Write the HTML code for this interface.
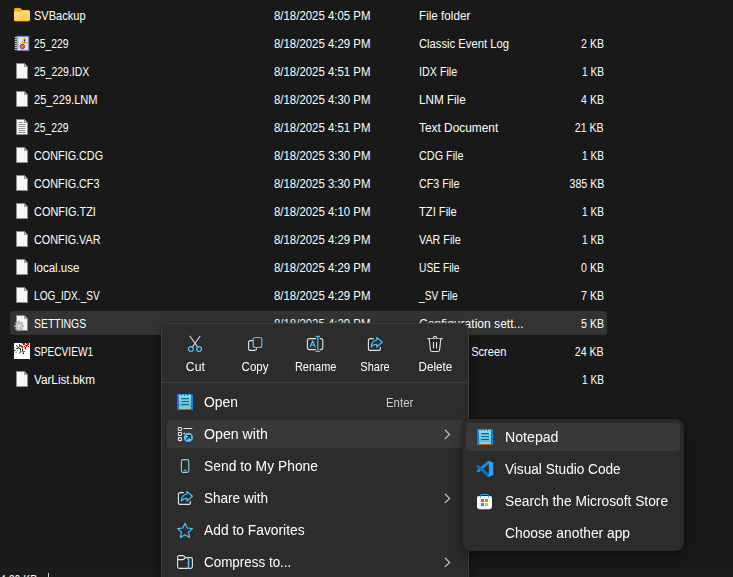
<!DOCTYPE html>
<html lang="en"><head><meta charset="utf-8"><title>File Explorer</title>
<style>
html,body{margin:0;padding:0}
body{width:733px;height:577px;background:#191919;overflow:hidden;position:relative;font-family:"Liberation Sans",sans-serif}
.t{position:absolute;white-space:pre;display:block}
.f12{font-size:12px;line-height:16px}
.f14{font-size:14px;line-height:20px}
svg{position:absolute;overflow:visible}
.gl{position:absolute;left:0;top:0;width:733px;height:577px;will-change:transform;pointer-events:none}
.sel{position:absolute;left:10px;top:311px;width:597px;height:24px;border-radius:3px;background:#333333}
.status{position:absolute;left:0;top:568px;width:733px;height:9px;background:#1c1c1c}
.vsep{position:absolute;left:48px;top:573px;width:1px;height:4px;background:#d0d0d0}
.menu{position:absolute;left:161px;top:323px;width:306px;height:270px;background:#2c2c2c;border:1px solid #3c3c3c;border-radius:8px;box-shadow:0 6px 14px rgba(0,0,0,.32),0 0 3px rgba(0,0,0,.25);box-sizing:content-box}
.msep{position:absolute;left:162px;top:382px;width:306px;height:1px;background:#3d3d3d}
.hov{position:absolute;left:167px;top:420px;width:297px;height:28px;border-radius:4px;background:#383838}
.sub{position:absolute;left:462px;top:419px;width:220px;height:130px;background:#2c2c2c;border:1px solid #272727;border-radius:8px;box-shadow:0 6px 14px rgba(0,0,0,.32),0 0 3px rgba(0,0,0,.3)}
.shov{position:absolute;left:466px;top:423px;width:214px;height:28px;border-radius:4px;background:#383838}
</style></head>
<body>
<div class="sel"></div>
<div class="status"></div><div class="vsep"></div>

<svg width="0" height="0" style="left:0;top:0"><defs>
<linearGradient id="fg" x1="0" y1="0" x2=".6" y2="1"><stop offset="0" stop-color="#ffe394"/><stop offset="1" stop-color="#ffcb45"/></linearGradient>
<linearGradient id="np" x1="0" y1="0" x2="0" y2="1"><stop offset="0" stop-color="#93dcf0"/><stop offset="1" stop-color="#5cb6d0"/></linearGradient>
<linearGradient id="vs" x1="0" y1="0" x2="0" y2="1"><stop offset="0" stop-color="#2aa7f5"/><stop offset="1" stop-color="#0a74c8"/></linearGradient>
<g id="file"><path d="M.5 .5H8.5L11.5 3.5V15.5H.5Z" fill="#f6f6f6" stroke="#8d8d8d"/><path d="M8.5 .5V3.5H11.5Z" fill="#d9d9d9" stroke="#8d8d8d" stroke-linejoin="round"/></g>
</defs></svg>
<svg style="left:14px;top:7px" width="16" height="16" viewBox="0 0 16 16">
<path d="M0 2.600Q0 1 1.600 1H5.600Q6.300 1 6.800 1.500L8.300 3H14.400Q16 3 16 4.600V11H0Z" fill="#f4b30c"/>
<path d="M0 6Q0 4.800 1.400 4.800H6.100Q6.800 4.800 7.300 4.400L8.100 3.800H14.400Q16 3.800 16 5.400V12.400Q16 14 14.400 14H1.600Q0 14 0 12.400Z" fill="url(#fg)"/>
<path d="M.4 5.500Q.6 5.200 1.400 5.200H6.200Q6.900 5.200 7.400 4.800L8.200 4.200H14.400" stroke="#fff0bd" stroke-width=".6" fill="none" opacity=".8"/>
<path d="M.3 13.300Q.8 14 1.600 14H14.400Q15.200 14 15.700 13.300" stroke="#eeae20" stroke-width=".7" fill="none"/>
</svg>
<svg style="left:14px;top:35px" width="16" height="16" viewBox="0 0 16 16">
<rect x="3.300" y="1.300" width="11.500" height="14.300" fill="#c3d1f1" stroke="#6a82c6" stroke-width=".9"/>
<path d="M5 3.300H13.800M5 5.300H13.800M5 7.300H13.800M5 9.300H13.800M5 11.300H13.800M5 13.300H13.800" stroke="#f4f7ff" stroke-width="1"/>
<path d="M1.200 2.700L3.600 2M1.200 4.700L3.600 4M1.200 6.700L3.600 6M1.200 8.700L3.600 8M1.200 10.700L3.600 10M1.200 12.700L3.600 12M1.200 14.700L3.600 14" stroke="#c9c9c9" stroke-width="1.200" stroke-linecap="round"/>
<path d="M10.200 3.200Q10.500 2.700 10.800 3.200L13.100 7.600Q13.300 8.200 12.700 8.200H8.300Q7.700 8.200 7.900 7.600Z" fill="#f2d411" stroke="#c9a90c" stroke-width=".5" stroke-linejoin="round"/>
<path d="M10.500 4.500V6.300M10.500 7V7.500" stroke="#1a1a1a" stroke-width="1"/>
<circle cx="8.400" cy="11.500" r="2.400" fill="#d61f26" stroke="#a8141a" stroke-width=".4"/>
<path d="M7.500 10.600L9.300 12.400M9.300 10.600L7.500 12.400" stroke="#fff" stroke-width=".9"/>
</svg>
<svg style="left:16px;top:63px" width="12" height="16" viewBox="0 0 12 16"><use href="#file"/></svg>
<svg style="left:16px;top:91px" width="12" height="16" viewBox="0 0 12 16"><use href="#file"/></svg>
<svg style="left:16px;top:147px" width="12" height="16" viewBox="0 0 12 16"><use href="#file"/></svg>
<svg style="left:16px;top:175px" width="12" height="16" viewBox="0 0 12 16"><use href="#file"/></svg>
<svg style="left:16px;top:203px" width="12" height="16" viewBox="0 0 12 16"><use href="#file"/></svg>
<svg style="left:16px;top:231px" width="12" height="16" viewBox="0 0 12 16"><use href="#file"/></svg>
<svg style="left:16px;top:259px" width="12" height="16" viewBox="0 0 12 16"><use href="#file"/></svg>
<svg style="left:16px;top:287px" width="12" height="16" viewBox="0 0 12 16"><use href="#file"/></svg>
<svg style="left:16px;top:371px" width="12" height="16" viewBox="0 0 12 16"><use href="#file"/></svg>
<svg style="left:16px;top:119px" width="12" height="16" viewBox="0 0 12 16"><use href="#file"/><path d="M2.500 3.500H7M2.500 5.500H9.500M2.500 7.500H9.500M2.500 9.500H9.500M2.500 11.500H9.500M2.500 13.500H9.500" stroke="#8c8c8c" stroke-width=".9"/></svg>
<svg style="left:16px;top:315px" width="12" height="16" viewBox="0 0 12 16"><use href="#file"/><path d="M6.21 10.21L7.76 10.39L7.76 11.61L6.21 11.79L5.80 12.78L6.77 14.00L5.90 14.87L4.68 13.90L3.69 14.31L3.51 15.86L2.29 15.86L2.11 14.31L1.12 13.90L-0.10 14.87L-0.97 14.00L0.00 12.78L-0.41 11.79L-1.96 11.61L-1.96 10.39L-0.41 10.21L0.00 9.22L-0.97 8.00L-0.10 7.13L1.12 8.10L2.11 7.69L2.29 6.14L3.51 6.14L3.69 7.69L4.68 8.10L5.90 7.13L6.77 8.00L5.80 9.22Z" fill="#ccd3da" stroke="#78818c" stroke-width=".55" stroke-linejoin="round"/><circle cx="2.9" cy="11.0" r="1.500" fill="#ffffff" stroke="#8b949e" stroke-width=".5"/></svg>
<svg style="left:14px;top:343px" width="16" height="16" viewBox="0 0 16 16">
<rect width="16" height="16" fill="#fff"/>
<g stroke="#0a0a0a" stroke-width=".9" fill="none" stroke-linecap="round">
<path d="M2.400 2.600L6.200 6.200M5.500 1.500L5.900 3.600M5.900 2.700L7.600 2.900L8.200 4.800M2.200 5.600L4.800 4.700M6.300 5.500L6.900 9L5.600 10M8.400 5.800L9 9.400L10.400 8.600"/>
<path d="M.4 7.500H.9M9.300 10.500H9.700M11.400 4.500V5.800" stroke-width="1.100"/>
<path d="M4 7.200L3 7.900M1.400 9.500H2.600" stroke="#9a9a9a" stroke-width=".7"/>
</g>
<g fill="#f00" shape-rendering="crispEdges"><rect x="12" y="0" width="2" height="1"/><rect x="14" y="0" width="1" height="2"/><rect x="11" y="2" width="1" height="1"/><rect x="13" y="2" width="1" height="1"/><rect x="10" y="3" width="1" height="1"/><rect x="12" y="3" width="1" height="1"/><rect x="14" y="3" width="1" height="1"/><rect x="8" y="3" width="1" height="1"/><rect x="13" y="1" width="1" height="1"/><rect x="8" y="0" width="3" height="1"/><rect x="9" y="1" width="2" height="1"/></g>
<rect x="12" y="2" width="1" height="1" fill="#111" shape-rendering="crispEdges"/>
</svg>

<span class="t f12" style="left:34.2px;top:8.0px;color:#fff;transform:scaleX(0.9207);transform-origin:0 50%">SVBackup</span>
<span class="t f12" style="left:274.3px;top:8.0px;color:#fff;transform:scaleX(0.9515);transform-origin:0 50%">8/18/2025 4:05 PM</span>
<span class="t f12" style="left:418.5px;top:8.0px;color:#fff;transform:scaleX(0.9737);transform-origin:0 50%">File folder</span>
<span class="t f12" style="left:34.2px;top:36.0px;color:#fff;transform:scaleX(0.8590);transform-origin:0 50%">25_229</span>
<span class="t f12" style="left:274.3px;top:36.0px;color:#fff;transform:scaleX(0.9515);transform-origin:0 50%">8/18/2025 4:29 PM</span>
<span class="t f12" style="left:418.5px;top:36.0px;color:#fff;transform:scaleX(0.9370);transform-origin:0 50%">Classic Event Log</span>
<span class="t f12" style="left:578.08px;top:36.0px;color:#fff;transform:scaleX(0.8802);transform-origin:100% 50%">2 KB</span>
<span class="t f12" style="left:34.2px;top:64.0px;color:#fff;transform:scaleX(0.8724);transform-origin:0 50%">25_229.IDX</span>
<span class="t f12" style="left:274.3px;top:64.0px;color:#fff;transform:scaleX(0.9515);transform-origin:0 50%">8/18/2025 4:51 PM</span>
<span class="t f12" style="left:418.5px;top:64.0px;color:#fff;transform:scaleX(0.8949);transform-origin:0 50%">IDX File</span>
<span class="t f12" style="left:578.08px;top:64.0px;color:#fff;transform:scaleX(0.8495);transform-origin:100% 50%">1 KB</span>
<span class="t f12" style="left:34.2px;top:92.0px;color:#fff;transform:scaleX(0.9255);transform-origin:0 50%">25_229.LNM</span>
<span class="t f12" style="left:274.3px;top:92.0px;color:#fff;transform:scaleX(0.9515);transform-origin:0 50%">8/18/2025 4:30 PM</span>
<span class="t f12" style="left:418.5px;top:92.0px;color:#fff;transform:scaleX(0.9726);transform-origin:0 50%">LNM File</span>
<span class="t f12" style="left:578.08px;top:92.0px;color:#fff;transform:scaleX(0.8802);transform-origin:100% 50%">4 KB</span>
<span class="t f12" style="left:34.2px;top:120.0px;color:#fff;transform:scaleX(0.8590);transform-origin:0 50%">25_229</span>
<span class="t f12" style="left:274.3px;top:120.0px;color:#fff;transform:scaleX(0.9515);transform-origin:0 50%">8/18/2025 4:51 PM</span>
<span class="t f12" style="left:418.5px;top:120.0px;color:#fff;transform:scaleX(0.9894);transform-origin:0 50%">Text Document</span>
<span class="t f12" style="left:571.40px;top:120.0px;color:#fff;transform:scaleX(0.8837);transform-origin:100% 50%">21 KB</span>
<span class="t f12" style="left:34.2px;top:148.0px;color:#fff;transform:scaleX(0.9012);transform-origin:0 50%">CONFIG.CDG</span>
<span class="t f12" style="left:274.3px;top:148.0px;color:#fff;transform:scaleX(0.9515);transform-origin:0 50%">8/18/2025 3:30 PM</span>
<span class="t f12" style="left:418.5px;top:148.0px;color:#fff;transform:scaleX(0.9018);transform-origin:0 50%">CDG File</span>
<span class="t f12" style="left:578.08px;top:148.0px;color:#fff;transform:scaleX(0.8495);transform-origin:100% 50%">1 KB</span>
<span class="t f12" style="left:34.2px;top:176.0px;color:#fff;transform:scaleX(0.9013);transform-origin:0 50%">CONFIG.CF3</span>
<span class="t f12" style="left:274.3px;top:176.0px;color:#fff;transform:scaleX(0.9515);transform-origin:0 50%">8/18/2025 3:30 PM</span>
<span class="t f12" style="left:418.5px;top:176.0px;color:#fff;transform:scaleX(0.8910);transform-origin:0 50%">CF3 File</span>
<span class="t f12" style="left:564.73px;top:176.0px;color:#fff;transform:scaleX(0.8863);transform-origin:100% 50%">385 KB</span>
<span class="t f12" style="left:34.2px;top:204.0px;color:#fff;transform:scaleX(0.9103);transform-origin:0 50%">CONFIG.TZI</span>
<span class="t f12" style="left:274.3px;top:204.0px;color:#fff;transform:scaleX(0.9515);transform-origin:0 50%">8/18/2025 4:10 PM</span>
<span class="t f12" style="left:418.5px;top:204.0px;color:#fff;transform:scaleX(0.9294);transform-origin:0 50%">TZI File</span>
<span class="t f12" style="left:578.08px;top:204.0px;color:#fff;transform:scaleX(0.8495);transform-origin:100% 50%">1 KB</span>
<span class="t f12" style="left:34.2px;top:232.0px;color:#fff;transform:scaleX(0.9013);transform-origin:0 50%">CONFIG.VAR</span>
<span class="t f12" style="left:274.3px;top:232.0px;color:#fff;transform:scaleX(0.9515);transform-origin:0 50%">8/18/2025 4:29 PM</span>
<span class="t f12" style="left:418.5px;top:232.0px;color:#fff;transform:scaleX(0.8977);transform-origin:0 50%">VAR File</span>
<span class="t f12" style="left:578.08px;top:232.0px;color:#fff;transform:scaleX(0.8495);transform-origin:100% 50%">1 KB</span>
<span class="t f12" style="left:34.2px;top:260.0px;color:#fff;transform:scaleX(0.9583);transform-origin:0 50%">local.use</span>
<span class="t f12" style="left:274.3px;top:260.0px;color:#fff;transform:scaleX(0.9515);transform-origin:0 50%">8/18/2025 4:29 PM</span>
<span class="t f12" style="left:418.5px;top:260.0px;color:#fff;transform:scaleX(0.8554);transform-origin:0 50%">USE File</span>
<span class="t f12" style="left:578.08px;top:260.0px;color:#fff;transform:scaleX(0.8802);transform-origin:100% 50%">0 KB</span>
<span class="t f12" style="left:34.2px;top:288.0px;color:#fff;transform:scaleX(0.8431);transform-origin:0 50%">LOG_IDX._SV</span>
<span class="t f12" style="left:274.3px;top:288.0px;color:#fff;transform:scaleX(0.9515);transform-origin:0 50%">8/18/2025 4:29 PM</span>
<span class="t f12" style="left:418.5px;top:288.0px;color:#fff;transform:scaleX(0.8532);transform-origin:0 50%">_SV File</span>
<span class="t f12" style="left:578.08px;top:288.0px;color:#fff;transform:scaleX(0.8802);transform-origin:100% 50%">7 KB</span>
<span class="t f12" style="left:34.2px;top:316.0px;color:#fff;transform:scaleX(0.8698);transform-origin:0 50%">SETTINGS</span>
<span class="t f12" style="left:274.3px;top:316.0px;color:#fff;transform:scaleX(0.9515);transform-origin:0 50%">8/18/2025 4:29 PM</span>
<span class="t f12" style="left:418.5px;top:316.0px;color:#fff;transform:scaleX(1.0052);transform-origin:0 50%">Configuration sett...</span>
<span class="t f12" style="left:578.08px;top:316.0px;color:#fff;transform:scaleX(0.8802);transform-origin:100% 50%">5 KB</span>
<span class="t f12" style="left:34.2px;top:344.0px;color:#fff;transform:scaleX(0.8439);transform-origin:0 50%">SPECVIEW1</span>
<span class="t f12" style="left:274.3px;top:344.0px;color:#fff;transform:scaleX(0.9515);transform-origin:0 50%">8/18/2025 4:29 PM</span>
<span class="t f12" style="left:418.5px;top:344.0px;color:#fff;transform:scaleX(0.9238);transform-origin:0 50%">SpecView Screen</span>
<span class="t f12" style="left:571.40px;top:344.0px;color:#fff;transform:scaleX(0.8837);transform-origin:100% 50%">24 KB</span>
<span class="t f12" style="left:34.2px;top:372.0px;color:#fff;transform:scaleX(0.9765);transform-origin:0 50%">VarList.bkm</span>
<span class="t f12" style="left:274.3px;top:372.0px;color:#fff;transform:scaleX(0.9515);transform-origin:0 50%">8/18/2025 4:29 PM</span>
<span class="t f12" style="left:418.5px;top:372.0px;color:#fff;transform:scaleX(0.9140);transform-origin:0 50%">BKM File</span>
<span class="t f12" style="left:578.08px;top:372.0px;color:#fff;transform:scaleX(0.8495);transform-origin:100% 50%">1 KB</span>
<span class="t f12" style="left:0.0px;top:571.5px;color:#fff;transform:scaleX(0.8735);transform-origin:0 50%">4.20 KB</span>

<div class="menu"></div>
<div class="msep"></div>
<div class="hov"></div>

<svg style="left:0;top:0" width="733" height="577" viewBox="0 0 733 577" fill="none" stroke-linecap="round" stroke-linejoin="round">
<!-- cut -->
<g stroke-width="1.1">
<path d="M190 336.200L197.800 347.200M200 336.200L192.200 347.200" stroke="#e4e4e4"/>
<circle cx="190.900" cy="349.100" r="2.400" stroke="#4cc2ff" stroke-width="1.2"/>
<circle cx="199.100" cy="349.100" r="2.400" stroke="#4cc2ff" stroke-width="1.2"/>
</g>
<!-- copy -->
<path d="M252.800 340.600H250.600Q248.600 340.600 248.600 342.600V348.400Q248.600 350.400 250.600 350.400H254.600Q256.600 350.400 256.600 348.600" stroke="#e4e4e4" stroke-width="1.1"/>
<rect x="253.200" y="337.500" width="8.600" height="10" rx="2" stroke="#4cc2ff" stroke-width="1.2"/>
<!-- rename -->
<path d="M315.600 338.600H309.400Q307.400 338.600 307.400 340.600V347.600Q307.400 349.600 309.400 349.600H315.600M320 338.600H320.800Q322.800 338.600 322.800 340.600V347.600Q322.800 349.600 320.800 349.600H320" stroke="#e4e4e4" stroke-width="1.1"/>
<path d="M317.800 336.300V351.500M316 336.300H319.600M316 351.500H319.600" stroke="#4cc2ff" stroke-width="1.2"/>
<path d="M310.200 347L312.700 340.800L315.200 347M311.100 345H314.300" stroke="#4cc2ff" stroke-width="1.100"/>
<!-- share (top) -->
<path d="M373.400 338.600H370.400Q368.400 338.600 368.400 340.600V348.400Q368.400 350.400 370.400 350.400H378.400Q380.400 350.400 380.400 348.400V347.400" stroke="#e4e4e4" stroke-width="1.1"/>
<path d="M376.800 337.400L382.200 342.200L376.800 347V344.500Q373.200 344.200 371.200 347Q371.600 340.600 376.800 340Z" stroke="#4cc2ff" stroke-width="1.200"/>
<!-- delete -->
<path d="M427.800 338.600H442.200M433.200 338.400Q433.200 336.400 435 336.400Q436.800 336.400 436.800 338.400" stroke="#e4e4e4" stroke-width="1.1"/>
<path d="M429.200 338.800L430.400 350Q430.600 351.500 432.100 351.500H437.900Q439.400 351.500 439.600 350L440.800 338.800" stroke="#e4e4e4" stroke-width="1.1" fill="#222"/>
<path d="M433.500 342.300V348M436.500 342.300V348" stroke="#e4e4e4" stroke-width="1.1"/>

<!-- open: notepad -->
<g id="npd">
<rect x="177" y="394" width="16" height="16" fill="#0c7ee0"/>
<rect x="179" y="394.700" width="12" height="14" fill="url(#np)"/>
<path d="M181.500 394.600V395.700M184.500 394.600V395.700M187.500 394.600V395.700" stroke="#075f86" stroke-width="1.100" stroke-linecap="butt"/>
<path d="M181.200 398.600H188.900M181.200 401.500H188.900M181.200 404.500H188.900" stroke="#04688a" stroke-width="1.100" stroke-linecap="butt"/>
<rect x="179.400" y="407.700" width="11.200" height="1" fill="#f7fcff"/>
<rect x="179" y="408.700" width="12" height="1.300" fill="#c4560c"/>
</g>

<!-- open with -->
<g stroke="#e4e4e4" stroke-width="1.1">
<rect x="178.400" y="427.500" width="3" height="3" rx=".6"/>
<rect x="178.400" y="432.500" width="3" height="3" rx=".6"/>
<rect x="178.400" y="437.600" width="3" height="3" rx=".6"/>
<path d="M183.800 428.500H191.800M183.800 433.400H184.600" />
</g>
<circle cx="188.400" cy="437.400" r="4.600" fill="#4cc2ff"/>
<path d="M186.700 439.100L190.200 435.600M187.400 435.500H190.300V438.400" stroke="#111" stroke-width="1.200"/>

<!-- phone -->
<rect x="181.400" y="459.600" width="7.400" height="12.800" rx="1.600" stroke="#7fd6ec" stroke-width="1.1"/>
<path d="M184.200 470.300H186" stroke="#7fd6ec" stroke-width="1.1"/>

<!-- share with -->
<path d="M183.400 492.600H180.400Q178.400 492.600 178.400 494.600V502.400Q178.400 504.400 180.400 504.400H188.400Q190.400 504.400 190.400 502.400V501.400" stroke="#e4e4e4" stroke-width="1.1"/>
<path d="M187 491.400L192.400 496.200L187 501V498.500Q183.400 498.200 181.400 501Q181.800 494.600 187 494Z" stroke="#4cc2ff" stroke-width="1.200"/>

<!-- star -->
<path d="M185 523.200L187.200 528L192.400 528.600L188.500 532.200L189.600 537.400L185 534.800L180.400 537.400L181.500 532.200L177.600 528.600L182.800 528Z" stroke="#4cc2ff" stroke-width="1.200"/>

<!-- compress -->
<path d="M177.600 557.400Q177.600 555.600 179.400 555.600H182.600Q183.400 555.600 184 556.200L185.400 557.600H190.600Q192.400 557.600 192.400 559.400V566.600Q192.400 568.400 190.600 568.400H179.400Q177.600 568.400 177.600 566.600Z" stroke="#e4e4e4" stroke-width="1.1"/>
<path d="M177.600 559.600H182.600Q183.400 559.600 184 559L185.400 557.600" stroke="#e4e4e4" stroke-width="1.1"/>
<path d="M188.500 557.600V568.900" stroke="#4cc2ff" stroke-width="1.200" stroke-linecap="butt"/>
<path d="M187.300 559.300h1.400M188.300 561.200h1.400M187.300 563.100h1.400M188.300 565h1.400M187.300 566.900h1.400" stroke="#4cc2ff" stroke-width="1.100" stroke-linecap="butt"/>

<!-- chevrons -->
<g stroke="#d8d8d8" stroke-width="1.1">
<path d="M445.200 430.200L449.600 434.400L445.200 438.600"/>
<path d="M445.200 494.200L449.600 498.400L445.200 502.600"/>
<path d="M445.200 558.200L449.600 562.400L445.200 566.600"/>
</g>
</svg>

<div class="gl">
<span class="t f12" style="left:186.36px;top:359.0px;color:#fff;transform:scaleX(1.0167);transform-origin:50% 50%">Cut</span>
<span class="t f12" style="left:241.09px;top:359.0px;color:#fff;transform:scaleX(0.9566);transform-origin:50% 50%">Copy</span>
<span class="t f12" style="left:292.92px;top:359.0px;color:#fff;transform:scaleX(0.9149);transform-origin:50% 50%">Rename</span>
<span class="t f12" style="left:358.98px;top:359.0px;color:#fff;transform:scaleX(0.9147);transform-origin:50% 50%">Share</span>
<span class="t f12" style="left:418.16px;top:359.0px;color:#fff;transform:scaleX(0.9658);transform-origin:50% 50%">Delete</span>
<span class="t f14" style="left:204.1px;top:392.0px;color:#fff;transform:scaleX(0.9898);transform-origin:0 50%">Open</span>
<span class="t f14" style="left:204.1px;top:424.0px;color:#fff;transform:scaleX(1.0119);transform-origin:0 50%">Open with</span>
<span class="t f14" style="left:204.1px;top:456.0px;color:#fff;transform:scaleX(0.9897);transform-origin:0 50%">Send to My Phone</span>
<span class="t f14" style="left:204.1px;top:488.0px;color:#fff;transform:scaleX(0.9674);transform-origin:0 50%">Share with</span>
<span class="t f14" style="left:204.1px;top:520.0px;color:#fff;transform:scaleX(0.9869);transform-origin:0 50%">Add to Favorites</span>
<span class="t f14" style="left:204.1px;top:552.0px;color:#fff;transform:scaleX(0.9590);transform-origin:0 50%">Compress to...</span>
<span class="t f12" style="left:386.4px;top:394.5px;color:#cfcfcf;transform:scaleX(0.9516);transform-origin:0 50%">Enter</span>
</div>

<div class="sub"></div>
<div class="shov"></div>

<svg style="left:0;top:0" width="733" height="577" viewBox="0 0 733 577" fill="none" stroke-linecap="round" stroke-linejoin="round">
<use href="#npd" transform="translate(300 35)"/>
<!-- vscode -->
<path d="M488.300 462.500L478.200 470.900" stroke="#1b90e2" stroke-width="2.900" stroke-linecap="round"/>
<path d="M488.300 475.300L478.200 466.500" stroke="#0a74c9" stroke-width="2.900" stroke-linecap="round"/>
<path d="M488.700 460.700L493.200 462.700V475L488.700 477.100Z" fill="#28a8f4"/>
<path d="M488.700 465.900V471.900L484.900 468.900Z" fill="#2c2c2c"/>
<!-- store -->
<path d="M477 497.700Q477 496 478.700 496H490.300Q492 496 492 497.700V506.200Q492 509.100 489.100 509.100H479.900Q477 509.100 477 506.200Z" fill="#f6f6f6"/>
<path d="M477.500 507.500Q478.200 509.100 479.900 509.100H489.100Q490.800 509.100 491.500 507.500" stroke="#dcdcdc" stroke-width=".6"/>
<path d="M480.400 497.400V495.600Q480.400 494.400 481.600 494.400H487.400Q488.600 494.400 488.600 495.600V497.400" stroke="#1fb0f2" stroke-width="1"/>
<rect x="481" y="499" width="3" height="3" fill="#f25022"/>
<rect x="485" y="499" width="3" height="3" fill="#7fba00"/>
<rect x="481" y="503" width="3" height="3" fill="#00a4ef"/>
<rect x="485" y="503" width="3" height="3" fill="#ffb900"/>
</svg>

<div class="gl">
<span class="t f14" style="left:505.1px;top:427.0px;color:#fff;transform:scaleX(1.0106);transform-origin:0 50%">Notepad</span>
<span class="t f14" style="left:505.1px;top:459.0px;color:#fff;transform:scaleX(0.9737);transform-origin:0 50%">Visual Studio Code</span>
<span class="t f14" style="left:505.1px;top:491.0px;color:#fff;transform:scaleX(0.9840);transform-origin:0 50%">Search the Microsoft Store</span>
<span class="t f14" style="left:505.1px;top:523.0px;color:#fff;transform:scaleX(0.9852);transform-origin:0 50%">Choose another app</span>
</div>

</body></html>
